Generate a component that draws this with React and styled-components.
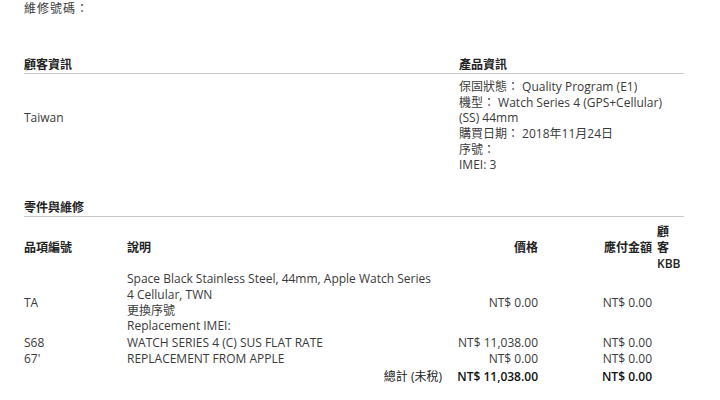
import React from "react";
import styled, { createGlobalStyle } from "styled-components";

const GlobalStyle = createGlobalStyle`
  body {
    margin: 0;
    background: #fff;
    font-family: "Open Sans", "Noto Sans CJK TC", sans-serif;
    font-size: 12px;
    line-height: 15.6px;
    color: #3a3a3a;
  }
`;

const product = [
  "保固狀態： Quality Program (E1)",
  "機型： Watch Series 4 (GPS+Cellular) (SS) 44mm",
  "購買日期： 2018年11月24日",
  "序號：",
  "IMEI: 3",
];

const App = () => (
  <>
    <GlobalStyle />
    <Page>
      <RepairNo>維修號碼：</RepairNo>
      <InfoGrid>
        <SectionTitle>顧客資訊</SectionTitle>
        <SectionTitle>產品資訊</SectionTitle>
        <Rule />
        <Customer>Taiwan</Customer>
        <ProductList>
          {product.map((line) => (
            <div key={line}>{line}</div>
          ))}
        </ProductList>
      </InfoGrid>

      <PartsTitle>零件與維修</PartsTitle>
      <Table>
        <colgroup>
          <col width="103" />
          <col width="315" />
          <col width="96" />
          <col width="114" />
          <col width="32" />
        </colgroup>
        <thead>
          <tr>
            <Th>品項編號</Th>
            <Th>說明</Th>
            <Th $right>價格</Th>
            <Th $right>應付金額</Th>
            <Th $kbb>
              顧<br />客<br />KBB
            </Th>
          </tr>
        </thead>
        <tbody>
          <tr>
            <Td>TA</Td>
            <Td>
              <Description>
                Space Black Stainless Steel, 44mm, Apple Watch Series 4
                Cellular, TWN
                <br />
                更換序號
                <br />
                Replacement IMEI:
              </Description>
            </Td>
            <Td $right>NT$ 0.00</Td>
            <Td $right>NT$ 0.00</Td>
            <Td />
          </tr>
          <ItemRow>
            <Td>S68</Td>
            <Td>WATCH SERIES 4 (C) SUS FLAT RATE</Td>
            <Td $right>NT$ 11,038.00</Td>
            <Td $right>NT$ 0.00</Td>
            <Td />
          </ItemRow>
          <ItemRow>
            <Td>67'</Td>
            <Td>REPLACEMENT FROM APPLE</Td>
            <Td $right>NT$ 0.00</Td>
            <Td $right>NT$ 0.00</Td>
            <Td />
          </ItemRow>
          <TotalRow>
            <Td />
            <Td $right>
              <TotalLabel>總計 (未稅)</TotalLabel>
            </Td>
            <Td $right $bold>NT$ 11,038.00</Td>
            <Td $right $bold>NT$ 0.00</Td>
            <Td />
          </TotalRow>
        </tbody>
      </Table>
    </Page>
  </>
);

export default App;

const Page = styled.main`
  width: 660px;
  padding: 1px 0 0 24px;
`;

const RepairNo = styled.div`
  letter-spacing: 1px;
`;

const InfoGrid = styled.section`
  display: grid;
  grid-template-columns: 435px 1fr;
  margin-top: 40px;
`;

const SectionTitle = styled.h3`
  margin: 0;
  font-size: 12px;
  font-weight: 600;
  color: #222;
  padding-bottom: 1px;
`;

const Rule = styled.hr`
  grid-column: 1 / span 2;
  margin: 0 0 5px;
  border: 0;
  border-top: 1px solid #c8c8c8;
`;

const Customer = styled.div`
  padding-top: 31px;
`;

const ProductList = styled.div`
  width: 225px;
`;

const PartsTitle = styled(SectionTitle)`
  margin-top: 27px;
  padding-bottom: 1px;
  border-bottom: 1px solid #c8c8c8;
`;

const Table = styled.table`
  width: 660px;
  table-layout: fixed;
  border-collapse: collapse;
  margin-top: 7px;
`;

const Th = styled.th`
  padding: 0;
  font-weight: 600;
  color: #222;
  vertical-align: middle;
  text-align: ${(p) => (p.$right ? "right" : "left")};
  padding-left: ${(p) => (p.$kbb ? "5px" : "0")};
  height: 47px;
`;

const Td = styled.td`
  padding: 0;
  vertical-align: middle;
  text-align: ${(p) => (p.$right ? "right" : "left")};
  font-weight: ${(p) => (p.$bold ? 600 : 400)};
  color: ${(p) => (p.$bold ? "#111" : "inherit")};
`;

const Description = styled.div`
  max-width: 312px;
`;

const ItemRow = styled.tr`
  td {
    padding-top: 1px;
  }
`;

const TotalRow = styled.tr`
  td {
    padding-top: 2px;
  }
`;

const TotalLabel = styled.span`
  color: #222;
`;
